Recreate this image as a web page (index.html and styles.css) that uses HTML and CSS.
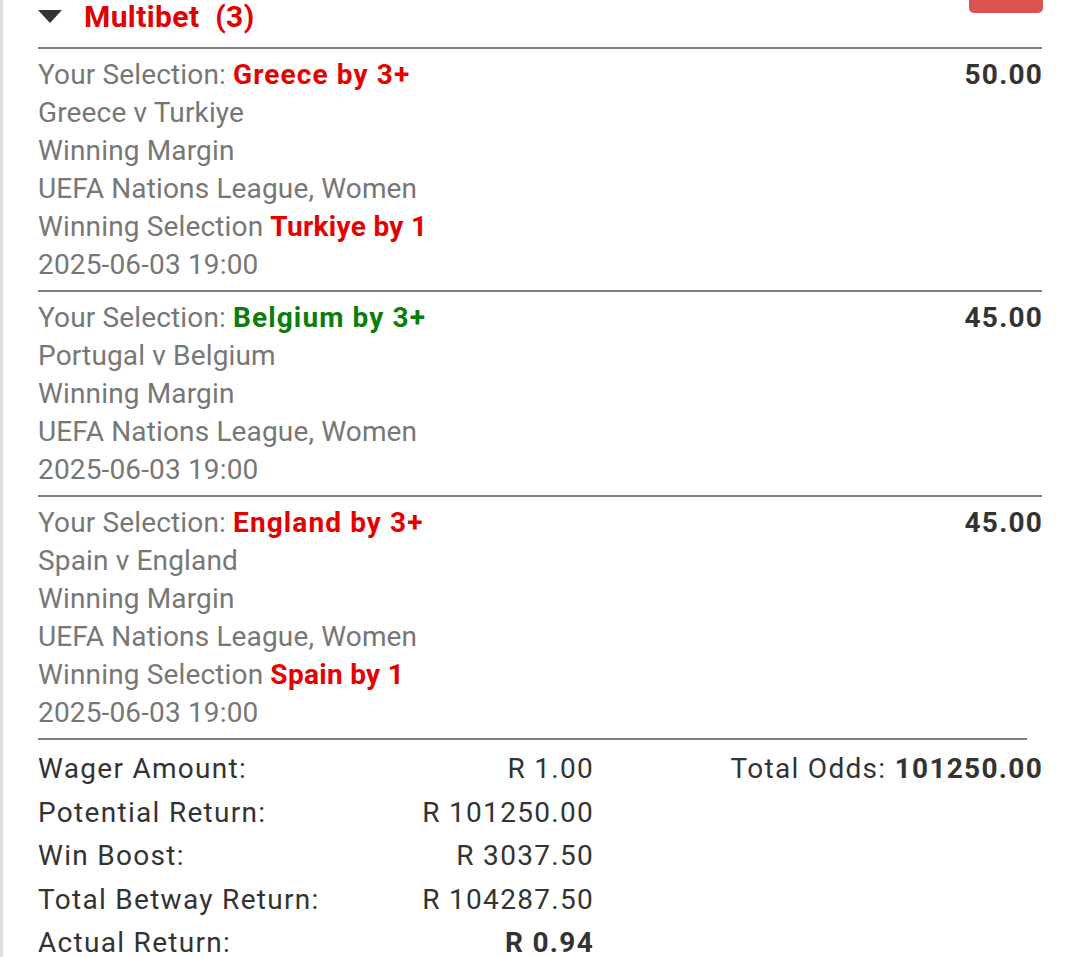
FILE: index.html
```html
<!DOCTYPE html>
<html>
<head>
<meta charset="utf-8">
<link rel="stylesheet" href="styles.css">
</head>
<body>
<div class="panel">
  <div class="bet-header">
    <span class="caret"></span>
    <span class="bet-title">Multibet&nbsp; (3)</span>
    <span class="spacer"></span>
    <span class="cancel-btn"></span>
  </div>

  <div class="leg">
    <div class="leg-info">
      <div class="line">Your Selection: <b class="pick red">Greece by 3+</b></div>
      <div class="line">Greece v Turkiye</div>
      <div class="line">Winning Margin</div>
      <div class="line">UEFA Nations League, Women</div>
      <div class="line">Winning Selection <b class="result red">Turkiye by 1</b></div>
      <div class="line">2025-06-03 19:00</div>
    </div>
    <div class="leg-odds">50.00</div>
  </div>

  <div class="leg">
    <div class="leg-info">
      <div class="line">Your Selection: <b class="pick green">Belgium by 3+</b></div>
      <div class="line">Portugal v Belgium</div>
      <div class="line">Winning Margin</div>
      <div class="line">UEFA Nations League, Women</div>
      <div class="line">2025-06-03 19:00</div>
    </div>
    <div class="leg-odds">45.00</div>
  </div>

  <div class="leg leg-last">
    <div class="leg-info">
      <div class="line">Your Selection: <b class="pick red">England by 3+</b></div>
      <div class="line">Spain v England</div>
      <div class="line">Winning Margin</div>
      <div class="line">UEFA Nations League, Women</div>
      <div class="line">Winning Selection <b class="result red">Spain by 1</b></div>
      <div class="line">2025-06-03 19:00</div>
    </div>
    <div class="leg-odds">45.00</div>
  </div>

  <div class="summary-rule"></div>

  <div class="summary">
    <div class="amounts">
      <span>Wager Amount:</span><span class="val">R 1.00</span>
      <span>Potential Return:</span><span class="val">R 101250.00</span>
      <span>Win Boost:</span><span class="val">R 3037.50</span>
      <span>Total Betway Return:</span><span class="val">R 104287.50</span>
      <span>Actual Return:</span><span class="val strong">R 0.94</span>
    </div>
    <div class="total-odds">Total Odds: <b>101250.00</b></div>
  </div>
</div>
</body>
</html>
```

FILE: styles.css
```css
* { box-sizing: border-box; }

html, body {
  margin: 0;
  padding: 0;
  background: #fff;
  overflow: hidden;
}

body {
  font-family: Roboto, "Liberation Sans", sans-serif;
  width: 1076px;
  height: 957px;
}

.panel {
  border-left: 3px solid #dedede;
  padding: 0 34px 0 35px;
  min-height: 957px;
}

.bet-header {
  display: flex;
  align-items: flex-start;
  height: 49px;
  border-bottom: 2px solid #808080;
}

.caret {
  width: 0;
  height: 0;
  margin-top: 10px;
  border-left: 12.5px solid transparent;
  border-right: 12.5px solid transparent;
  border-top: 13px solid #333;
}

.bet-title {
  margin-left: 22px;
  font-size: 30px;
  font-weight: 700;
  letter-spacing: 0.4px;
  line-height: 34px;
  color: #e00000;
}

.spacer { flex: 1; }

.cancel-btn {
  width: 74px;
  height: 40px;
  margin-top: -27px;
  margin-right: -1px;
  border-radius: 5px;
  background: #d9534f;
}

.leg {
  display: flex;
  justify-content: space-between;
  padding: 7px 0 6px;
  border-bottom: 2px solid #808080;
}

.leg-last { border-bottom: none; }

.leg-info {
  font-size: 28px;
  line-height: 38px;
  letter-spacing: 0.15px;
  color: #777;
}

.line b { font-weight: 700; }
.pick { letter-spacing: 1.1px; }
.result { letter-spacing: 0.3px; }

.red { color: #e50000; }
.green { color: #0a7d0a; }

.leg-odds {
  font-size: 28px;
  line-height: 38px;
  font-weight: 700;
  letter-spacing: 1.2px;
  margin-right: -1px;
  color: #333;
}

.summary-rule {
  height: 2px;
  background: #808080;
  margin-right: 15px;
}

.summary {
  display: flex;
  justify-content: space-between;
  padding-top: 7px;
  font-size: 28px;
  letter-spacing: 1.3px;
  line-height: 43.5px;
  color: #333;
}

.amounts {
  display: grid;
  grid-template-columns: 1fr auto;
  width: 556px;
}

.val { text-align: right; }
.strong { font-weight: 700; }

.total-odds { margin-right: -1px; }
.total-odds b { font-weight: 700; }
```
